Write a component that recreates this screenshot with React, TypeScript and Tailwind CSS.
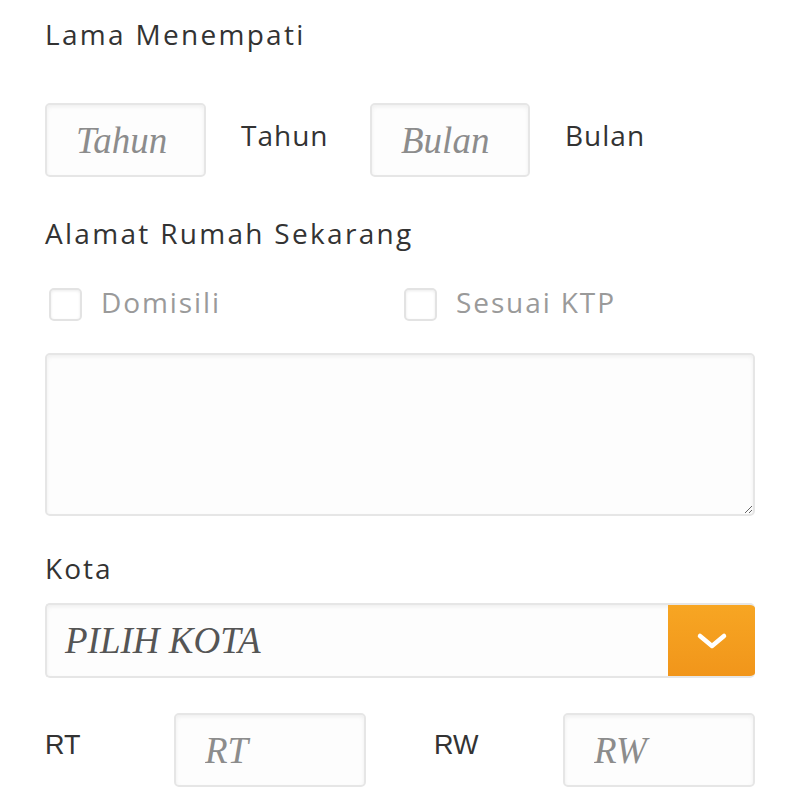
import React from 'react';

const labelFont = { fontFamily: '"Open Sans", "Liberation Sans", sans-serif' };
const serifFont = { fontFamily: '"Liberation Serif", "DejaVu Serif", serif' };
const armFont = { fontFamily: '"Liberation Sans", Arial, sans-serif' };

function Field({ placeholder, className = '' }: { placeholder: string; className?: string }) {
  return (
    <input
      placeholder={placeholder}
      className={`h-[74px] rounded-[5px] border-2 border-[#e6e6e6] bg-[#fdfdfd] px-[29px] text-[37px] italic text-[#555] placeholder:text-[#8c8c8c] shadow-[inset_0_2px_4px_rgba(0,0,0,0.06)] outline-none ${className}`}
      style={serifFont}
    />
  );
}

function Check({ label }: { label: string }) {
  return (
    <label className="flex items-center gap-[19px]">
      <span className="h-[33px] w-[33px] rounded-[5px] border-2 border-[#e3e3e3] bg-white shadow-[inset_0_1px_3px_rgba(0,0,0,0.08)]" />
      <span className="mb-[4px] text-[28px] tracking-[1.9px] text-[#9a9a9a]" style={labelFont}>{label}</span>
    </label>
  );
}

export default function App() {
  return (
    <div className="min-h-[800px] w-[800px] bg-white px-[45px] pt-[13px] text-[#333]">
      <div className="text-[28px] leading-[42px] tracking-[2.3px]" style={labelFont}>Lama Menempati</div>

      <div className="mt-[48px] flex items-center">
        <Field placeholder="Tahun" className="w-[161px]" />
        <span className="mb-[10px] ml-[35px] w-[129px] text-[28px] tracking-[1px]" style={labelFont}>Tahun</span>
        <Field placeholder="Bulan" className="w-[160px]" />
        <span className="mb-[10px] ml-[35px] text-[28px] tracking-[1px]" style={labelFont}>Bulan</span>
      </div>

      <div className="mt-[35px] text-[28px] leading-[42px] tracking-[2.3px]" style={labelFont}>Alamat Rumah Sekarang</div>

      <div className="mt-[27px] flex items-center pl-[4px]">
        <div className="w-[355px]"><Check label="Domisili" /></div>
        <Check label="Sesuai KTP" />
      </div>

      <textarea
        className="mt-[26px] block h-[163px] w-full resize-y rounded-[5px] border-2 border-[#e6e6e6] bg-[#fdfdfd] shadow-[inset_0_2px_4px_rgba(0,0,0,0.06)] outline-none"
      />

      <div className="mt-[31px] text-[28px] leading-[42px] tracking-[2px]" style={labelFont}>Kota</div>

      <div className="mt-[14px] flex h-[75px] w-full overflow-hidden rounded-[5px] border-2 border-r-0 border-[#e6e6e6] bg-[#fdfdfd] shadow-[inset_0_2px_4px_rgba(0,0,0,0.06)]">
        <div className="flex flex-1 items-center pl-[18px] text-[37px] italic text-[#555]" style={serifFont}>
          PILIH KOTA
        </div>
        <div className="-my-[2px] flex w-[87px] items-center justify-center bg-gradient-to-b from-[#f7a623] to-[#f1951a]">
          <svg width="32" height="20" viewBox="0 0 32 20" fill="none">
            <path d="M4 5 L16 15 L28 5" stroke="white" strokeWidth="4.5" strokeLinecap="round" strokeLinejoin="round" />
          </svg>
        </div>
      </div>

      <div className="mt-[35px] flex items-center">
        <span className="mb-[10px] w-[129px] text-[27px] text-[#333]" style={armFont}>RT</span>
        <Field placeholder="RT" className="w-[192px]" />
        <span className="mb-[10px] ml-[68px] w-[129px] text-[27px] text-[#333]" style={armFont}>RW</span>
        <Field placeholder="RW" className="w-[192px]" />
      </div>
    </div>
  );
}
